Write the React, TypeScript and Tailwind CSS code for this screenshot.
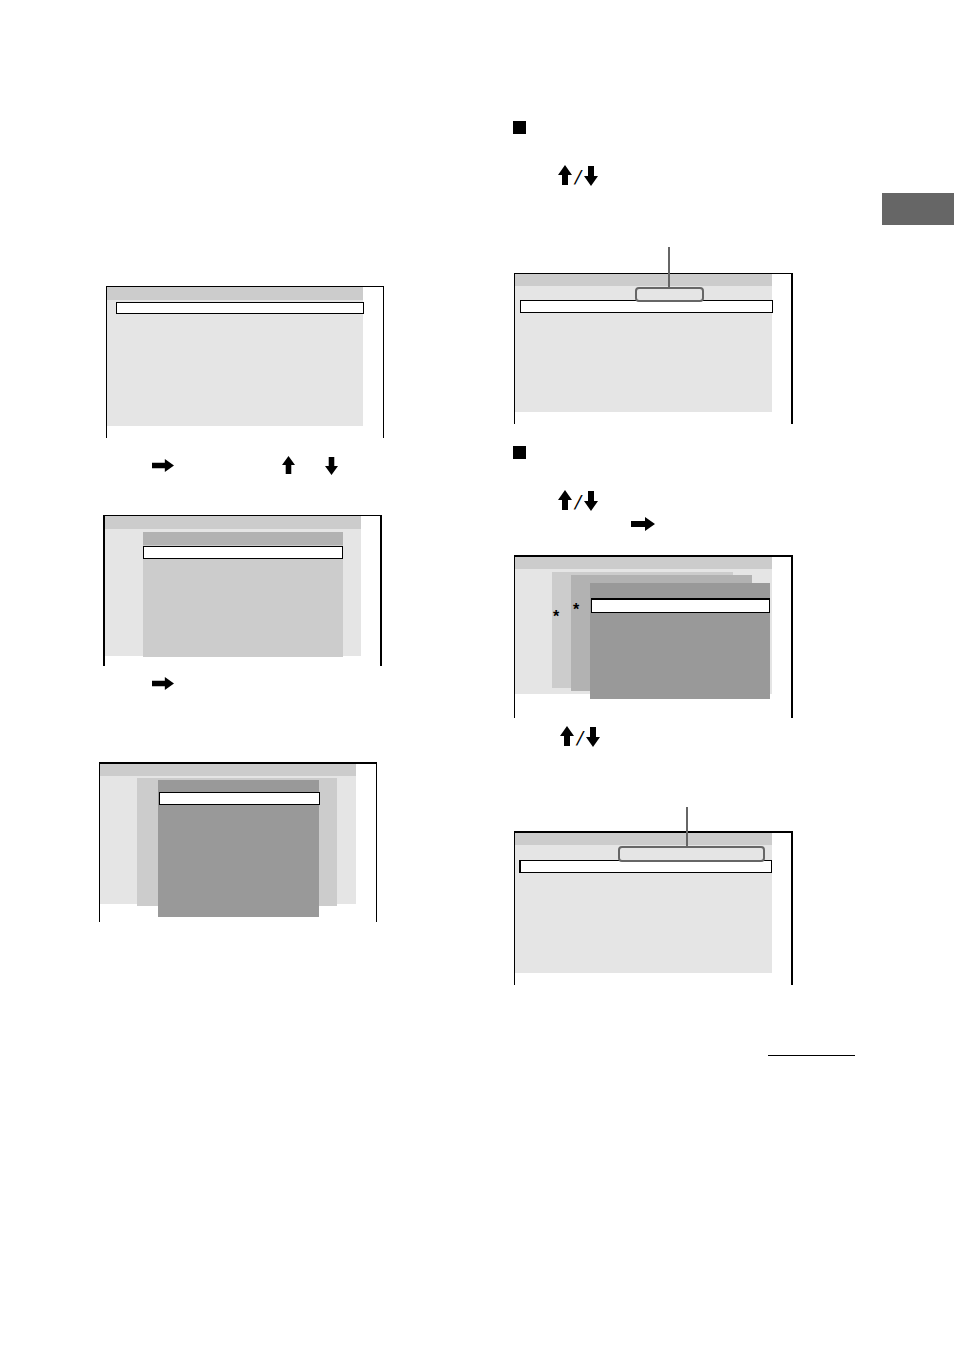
import type { ReactNode } from "react";
import clsx from "clsx";

type IconProps = { className?: string };

function ArrowRight({ className }: IconProps) {
  return (
    <svg viewBox="0 0 24 14" preserveAspectRatio="none" className={className} aria-hidden="true">
      <path d="M0 4h14V0l10 7-10 7v-4H0z" />
    </svg>
  );
}

function ArrowUp({ className }: IconProps) {
  return (
    <svg viewBox="0 0 14 20" preserveAspectRatio="none" className={className} aria-hidden="true">
      <path d="M7 0l7 10h-4v10H4V10H0z" />
    </svg>
  );
}

function ArrowDown({ className }: IconProps) {
  return (
    <svg viewBox="0 0 14 20" preserveAspectRatio="none" className={className} aria-hidden="true">
      <path d="M7 20l7-10h-4V0H4v10H0z" />
    </svg>
  );
}

function UpDown({ className }: IconProps) {
  return (
    <div className={clsx("flex h-[21px] gap-[3px]", className)}>
      <ArrowUp className="h-5 w-[14px]" />
      <span className="w-[6px] font-['DejaVu_Sans',sans-serif] text-[18px] leading-[23px] italic">
        /
      </span>
      <ArrowDown className="h-5 w-[14px] self-end" />
    </div>
  );
}

function Bullet({ className }: IconProps) {
  return <div className={clsx("size-[13px] bg-black", className)} />;
}

type ScreenProps = {
  className: string;
  title: string;
  body: string;
  children: ReactNode;
};

// on-screen menu: title strip, grey body, and whatever is layered on top
function Screen({ className, title, body, children }: ScreenProps) {
  return (
    <figure className={clsx("relative border-black", className)}>
      <div className={clsx("bg-[#ccc]", title)} />
      <div className={clsx("bg-[#e5e5e5]", body)} />
      {children}
    </figure>
  );
}

function Layer({ className, children }: { className: string; children?: ReactNode }) {
  return <div className={clsx("absolute", className)}>{children}</div>;
}

function Highlight({ className }: { className: string }) {
  return <div className={clsx("absolute border-black bg-white", className)} />;
}

// pointer line and the rounded box it ends in
function Callout({ className, line }: { className: string; line: string }) {
  return (
    <div className={clsx("absolute rounded-[4px] border-2 border-[#666]", className)}>
      <div className={clsx("absolute bottom-full w-[2px] bg-[#666]", line)} />
    </div>
  );
}

export default function App() {
  return (
    <main className="grid min-h-screen grid-cols-[minmax(0,414fr)_minmax(0,369fr)_72px] bg-white pl-[99px] font-['Liberation_Sans',sans-serif] text-black">
      <section className="pt-[286px]">
        <Screen
          className="ml-[7px] h-[152px] w-[278px] border-x border-t"
          title="h-[13px] w-64"
          body="h-[126px] w-64"
        >
          <Highlight className="top-[15px] left-[9px] h-3 w-[248px] border" />
        </Screen>

        <div className="mt-[18px] flex h-[19px] items-center pl-[53px]">
          <ArrowRight className="h-[13px] w-[22px]" />
          <ArrowUp className="ml-[108px] h-[18px] w-[13px] self-start" />
          <ArrowDown className="ml-[30px] h-[18px] w-[13px] self-end" />
        </div>

        <Screen
          className="mt-10 ml-1 h-[151px] w-[279px] border-x-2 border-t"
          title="h-[13px] w-64"
          body="h-[127px] w-64"
        >
          <Layer className="top-4 left-[38px] h-[125px] w-[200px] bg-[#ccc]">
            <div className="h-[13px] bg-[#b2b2b2]" />
            <Highlight className="top-[14px] left-0 h-[13px] w-full border" />
          </Layer>
        </Screen>

        <ArrowRight className="mt-[11px] ml-[53px] h-[13px] w-[22px]" />

        <Screen
          className="mt-[72px] h-[160px] w-[278px] border-x border-t-2"
          title="h-3 w-64"
          body="h-32 w-64"
        >
          <Layer className="top-[14px] left-[37px] h-32 w-[200px] bg-[#ccc]" />
          <Layer className="top-4 left-[58px] h-[137px] w-[161px] bg-[#999]">
            <Highlight className="top-3 left-px h-[13px] w-full border" />
          </Layer>
        </Screen>
      </section>

      <section className="flex flex-col items-start pt-[121px] pr-[27px]">
        <Bullet />
        <UpDown className="mt-[31px] ml-[45px]" />
        <Screen
          className="mt-[87px] ml-px h-[151px] w-[279px] border-t border-r-2 border-l"
          title="h-3 w-[257px]"
          body="h-[126px] w-[257px]"
        >
          <Highlight className="top-[26px] left-[5px] h-[13px] w-[253px] border" />
          <Callout className="top-[13px] left-[120px] h-[15px] w-[69px]" line="left-[31px] h-[42px]" />
        </Screen>

        <Bullet className="mt-[22px]" />
        <UpDown className="mt-[31px] ml-[45px]" />
        <ArrowRight className="mt-[6px] ml-[118px] h-[14px] w-6" />
        <Screen
          className="mt-6 ml-px h-[163px] w-[279px] border-t-2 border-r-2 border-l"
          title="h-3 w-[257px]"
          body="h-[125px] w-[257px]"
        >
          <Layer className="top-[15px] left-[37px] h-[116px] w-[181px] bg-[#ccc] pt-[35px] pl-px text-[16px] leading-5 font-bold">
            *
          </Layer>
          <Layer className="top-[18px] left-[56px] h-[116px] w-[181px] bg-[#b2b2b2] pt-[25px] pl-[2px] text-[16px] leading-5 font-bold">
            *
          </Layer>
          <Layer className="top-[26px] left-[75px] h-[116px] w-[180px] bg-[#999]">
            <Highlight className="top-[15px] right-0 left-px h-[15px] border border-t-2" />
          </Layer>
        </Screen>

        <UpDown className="mt-2 ml-[47px]" />
        <Screen
          className="mt-[84px] ml-px h-[154px] w-[279px] border-t-2 border-r-2 border-l"
          title="h-3 w-[257px]"
          body="h-32 w-[257px]"
        >
          <Highlight className="top-[27px] left-1 h-[13px] w-[253px] border border-l-2" />
          <Callout className="top-[13px] left-[103px] h-4 w-[147px]" line="left-[66px] h-[41px]" />
        </Screen>

        <hr className="mt-[70px] w-[87px] self-end border-t border-black" />
      </section>

      <aside className="mt-[193px] h-8 bg-[#666]" />
    </main>
  );
}
